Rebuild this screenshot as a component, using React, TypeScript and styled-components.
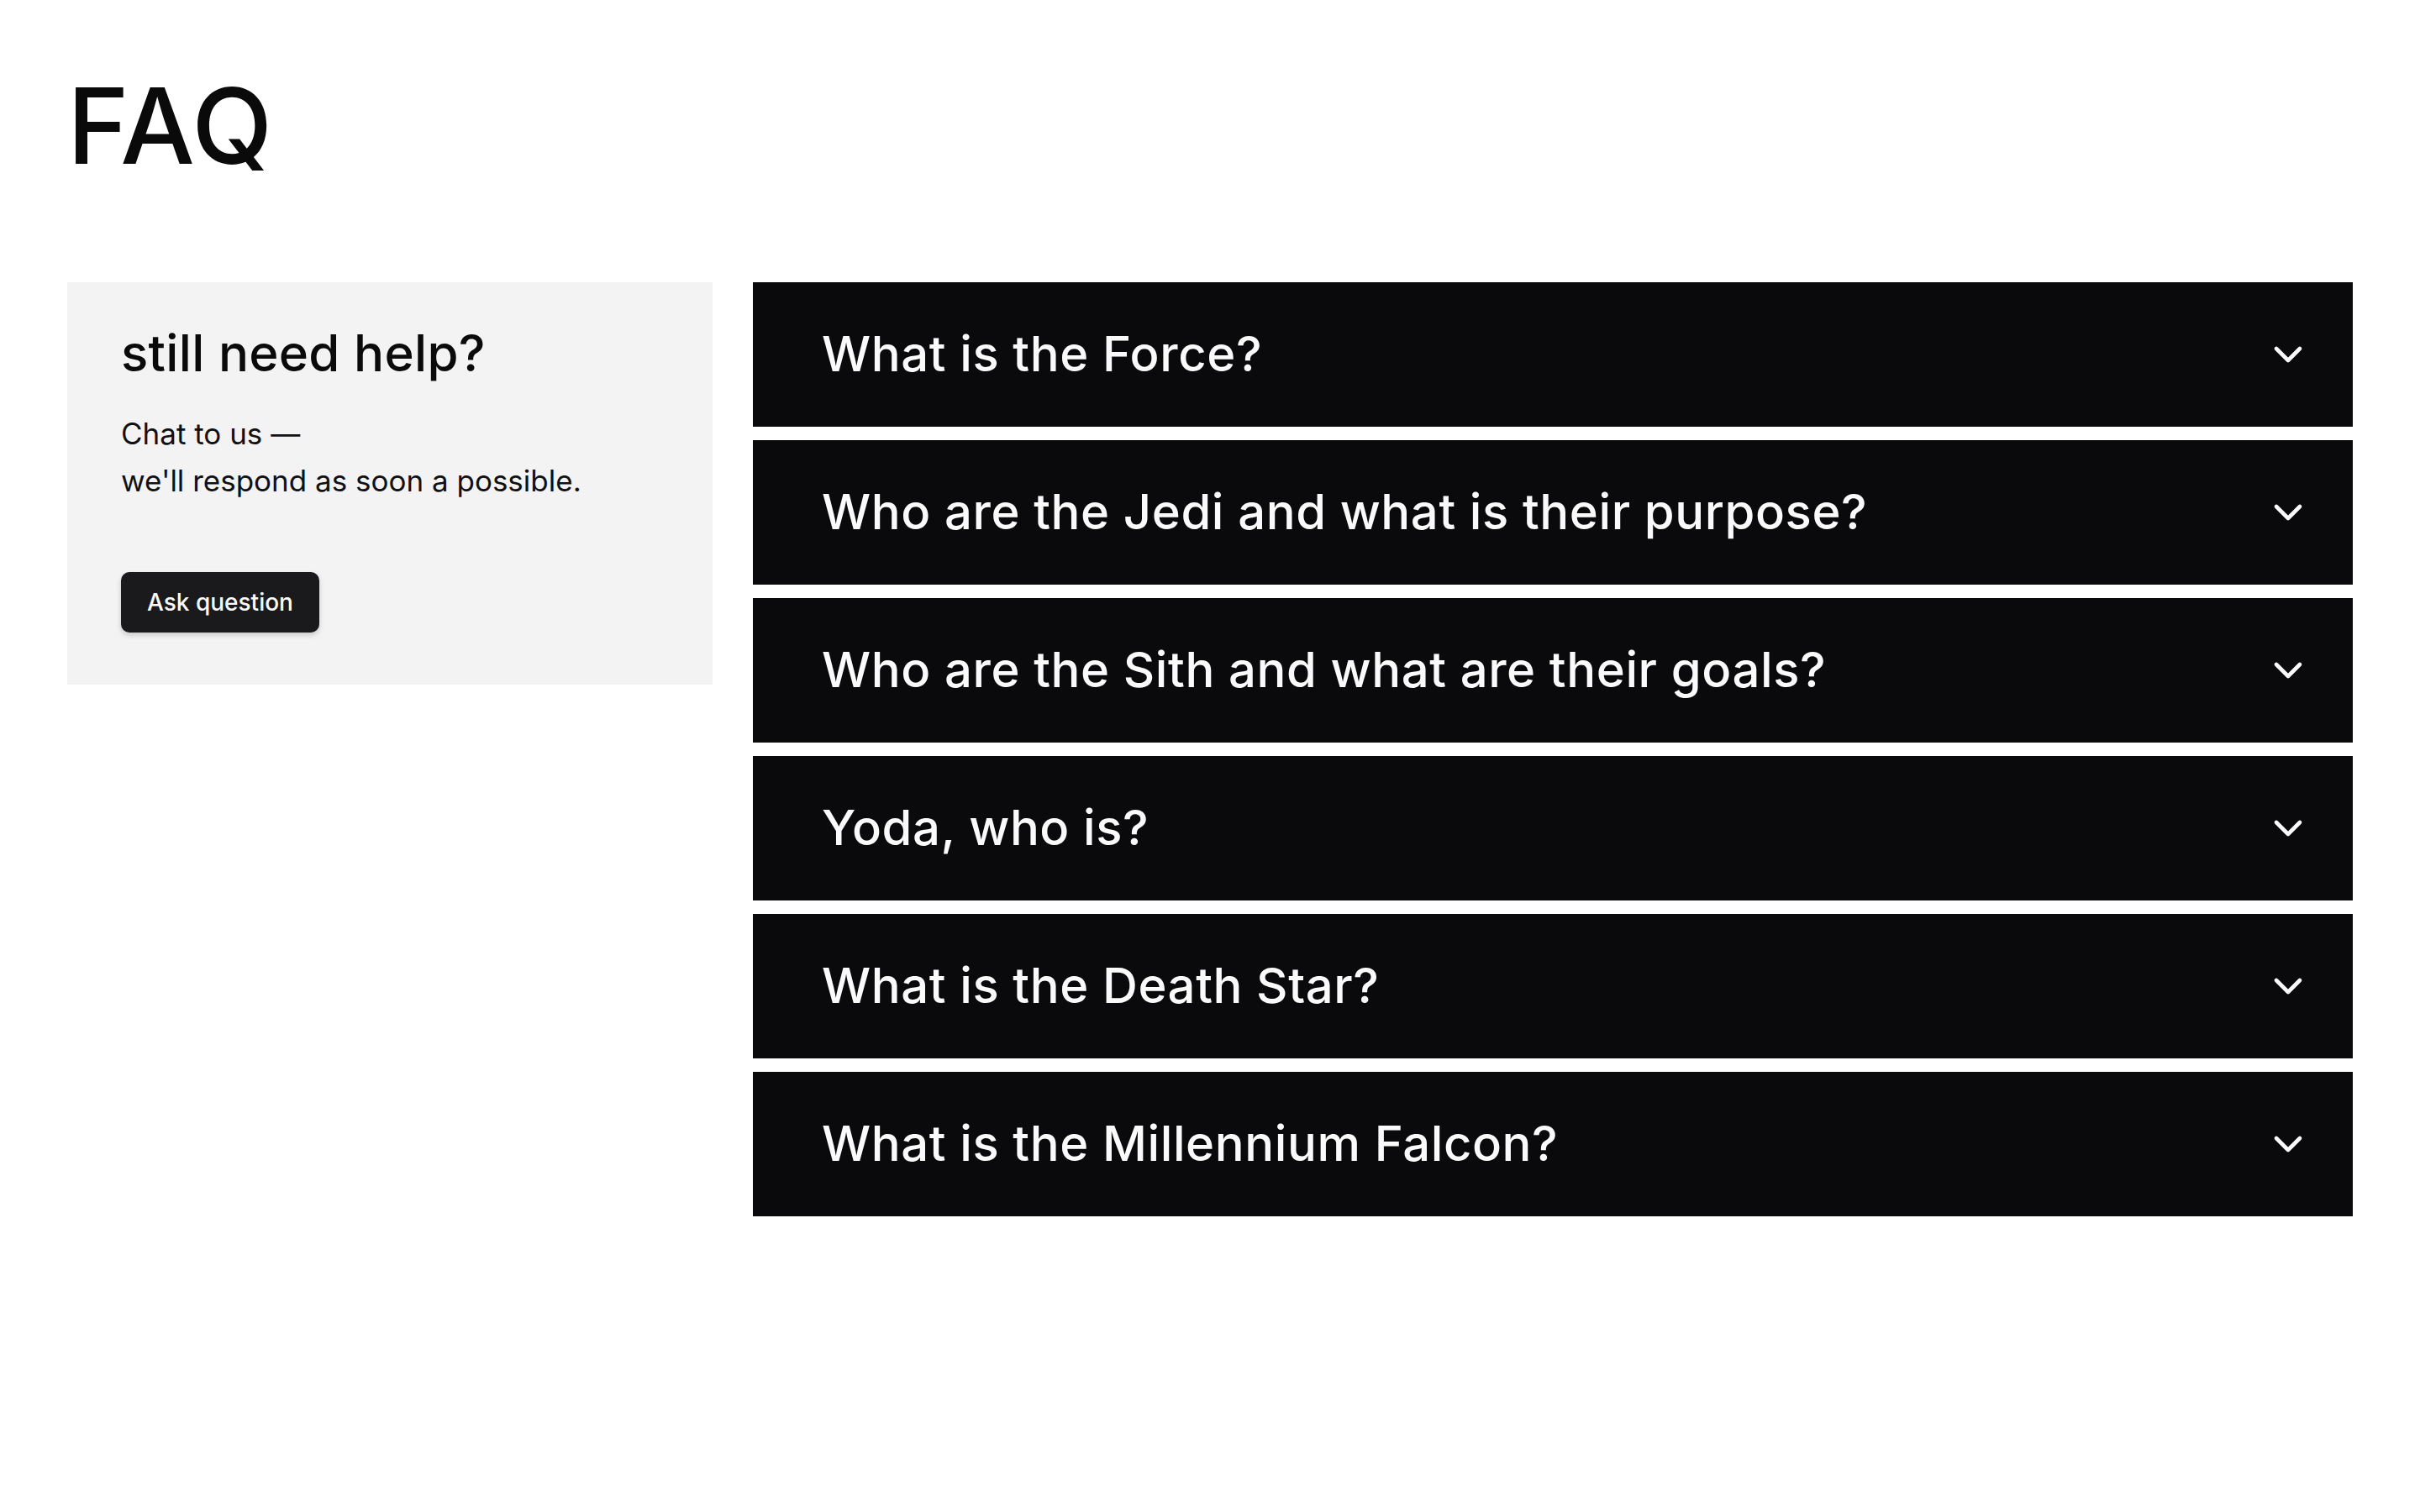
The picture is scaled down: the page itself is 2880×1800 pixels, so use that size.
import React from "react";
import styled, { createGlobalStyle } from "styled-components";

const GlobalStyle = createGlobalStyle`
  html, body {
    margin: 0;
    padding: 0;
    background: #ffffff;
  }
  body {
    font-family: Inter, "Liberation Sans", sans-serif;
    color: #0a0a0b;
  }
  * { box-sizing: border-box; }
`;

const Page = styled.main`
  padding: 75px 80px 80px;
`;

const Title = styled.h1`
  margin: 0;
  font-size: 125px;
  font-weight: 500;
  line-height: 150px;
  letter-spacing: 1px;
  color: #0a0a0b;
`;

const Layout = styled.section`
  margin-top: 111px;
  display: grid;
  grid-template-columns: 768px 1fr;
  gap: 48px;
  align-items: start;
`;

const HelpCard = styled.aside`
  background: #f3f3f3;
  padding: 49px 64px 62px;
  display: flex;
  flex-direction: column;
  align-items: flex-start;
`;

const HelpTitle = styled.h2`
  margin: 0;
  font-size: 60px;
  font-weight: 500;
  line-height: 70px;
  letter-spacing: 0.3px;
  color: #0a0a0b;
`;

const HelpText = styled.p`
  margin: 33px 0 0;
  font-size: 35px;
  line-height: 56px;
  font-weight: 400;
  color: #111113;
`;

const AskButton = styled.button`
  margin-top: 81px;
  height: 72px;
  padding: 0 31px;
  border: none;
  border-radius: 10px;
  background: #1a1a1c;
  color: #fafafa;
  font-family: Inter, "Liberation Sans", sans-serif;
  font-size: 28px;
  font-weight: 500;
  box-shadow: 0 3px 6px rgba(0, 0, 0, 0.18);
  cursor: pointer;
`;

const List = styled.div`
  display: flex;
  flex-direction: column;
  gap: 16px;
`;

const Item = styled.button`
  display: flex;
  align-items: center;
  justify-content: space-between;
  width: 100%;
  height: 172px;
  padding: 0 49px 0 82px;
  border: none;
  background: #0a0a0c;
  color: #fafafa;
  font-family: Inter, "Liberation Sans", sans-serif;
  text-align: left;
  cursor: pointer;
`;

const Question = styled.span`
  font-size: 58px;
  font-weight: 500;
  line-height: 70px;
  letter-spacing: 0.6px;
  margin-top: -2px;
`;

const Chevron = styled.svg`
  width: 56px;
  height: 56px;
  flex-shrink: 0;
`;

const questions = [
  "What is the Force?",
  "Who are the Jedi and what is their purpose?",
  "Who are the Sith and what are their goals?",
  "Yoda, who is?",
  "What is the Death Star?",
  "What is the Millennium Falcon?",
];

export default function App() {
  return (
    <>
      <GlobalStyle />
      <Page>
        <Title>FAQ</Title>
        <Layout>
          <HelpCard>
            <HelpTitle>still need help?</HelpTitle>
            <HelpText>
              Chat to us —<br />
              we'll respond as soon a possible.
            </HelpText>
            <AskButton>Ask question</AskButton>
          </HelpCard>
          <List>
            {questions.map((q) => (
              <Item key={q}>
                <Question>{q}</Question>
                <Chevron
                  viewBox="0 0 24 24"
                  fill="none"
                  stroke="currentColor"
                  strokeWidth={2}
                  strokeLinecap="round"
                  strokeLinejoin="round"
                >
                  <path d="m6 9 6 6 6-6" />
                </Chevron>
              </Item>
            ))}
          </List>
        </Layout>
      </Page>
    </>
  );
}
